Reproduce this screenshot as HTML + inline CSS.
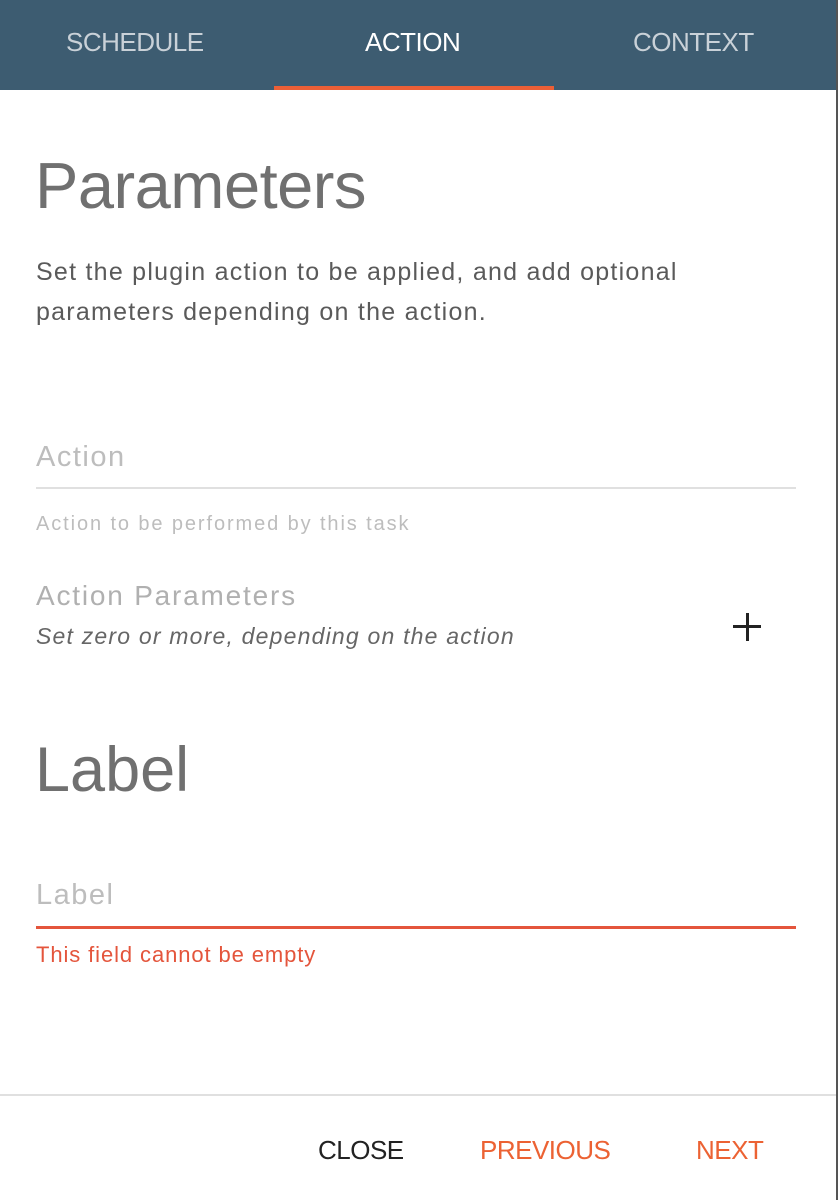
<!DOCTYPE html>
<html><head><style>
html,body{margin:0;padding:0;width:838px;height:1200px;overflow:hidden;background:#fff;font-family:"Liberation Sans",Arial,sans-serif;position:relative}
.a{position:absolute;white-space:nowrap}
</style></head><body>
<div class="a" style="left:0;top:0;width:836px;height:90px;background:#3d5c71"></div>
<div class="a" style="left:836px;top:0;width:2px;height:1200px;background:#555"></div>
<div class="a" style="left:66px;top:27px;font-size:26px;color:#c9d1d8;letter-spacing:-0.5px">SCHEDULE</div>
<div class="a" style="left:365px;top:27px;font-size:26px;color:#fff;letter-spacing:-0.5px">ACTION</div>
<div class="a" style="left:633px;top:27px;font-size:26px;color:#c9d1d8;letter-spacing:-0.5px">CONTEXT</div>
<div class="a" style="left:274px;top:86px;width:280px;height:4px;background:#ec5f36"></div>
<div class="a" style="left:35px;top:148px;font-size:65px;color:#707070;letter-spacing:-0.5px">Parameters</div>
<div class="a" style="left:36px;top:252px;font-size:25px;line-height:40px;color:#5a5a5a;letter-spacing:1.25px">Set the plugin action to be applied, and add optional<br>parameters depending on the action.</div>
<div class="a" style="left:36px;top:441px;font-size:29px;color:#bdbdbd;letter-spacing:1.5px">Action</div>
<div class="a" style="left:36px;top:487px;width:760px;height:2px;background:#e0e0e0"></div>
<div class="a" style="left:36px;top:513px;font-size:20px;color:#bdbdbd;letter-spacing:1.9px">Action to be performed by this task</div>
<div class="a" style="left:36px;top:580px;font-size:28px;color:#b0b0b0;letter-spacing:1.8px">Action Parameters</div>
<div class="a" style="left:36px;top:623px;font-size:23px;color:#666;font-style:italic;letter-spacing:1.2px">Set zero or more, depending on the action</div>
<div class="a" style="left:733px;top:625px;width:28px;height:3px;background:#222"></div>
<div class="a" style="left:746px;top:613px;width:3px;height:28px;background:#222"></div>
<div class="a" style="left:35px;top:734px;font-size:63px;color:#707070;letter-spacing:0px">Label</div>
<div class="a" style="left:36px;top:879px;font-size:29px;color:#bdbdbd;letter-spacing:1.5px">Label</div>
<div class="a" style="left:36px;top:926px;width:760px;height:3px;background:#e4553c"></div>
<div class="a" style="left:36px;top:942px;font-size:22px;color:#e4553c;letter-spacing:0.9px">This field cannot be empty</div>
<div class="a" style="left:0;top:1094px;width:836px;height:2px;background:#e0e0e0"></div>
<div class="a" style="left:318px;top:1135px;font-size:26px;color:#222;letter-spacing:-0.5px">CLOSE</div>
<div class="a" style="left:480px;top:1135px;font-size:26px;color:#ec6233;letter-spacing:-0.5px">PREVIOUS</div>
<div class="a" style="left:696px;top:1135px;font-size:26px;color:#ec6233;letter-spacing:-0.5px">NEXT</div>
</body></html>
